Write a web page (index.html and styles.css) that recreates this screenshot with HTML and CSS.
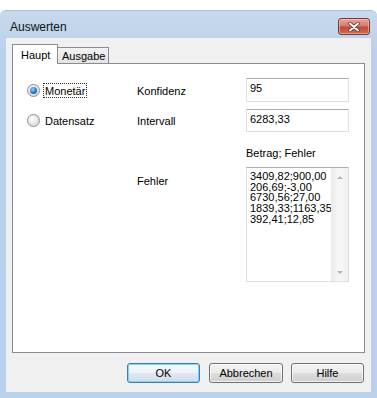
FILE: index.html
```
<!DOCTYPE html>
<html lang="de">
<head>
  <meta charset="UTF-8" />
  <title>Auswerten</title>
  <link rel="stylesheet" href="styles.css">
</head>
<body>
  <div class="window">
    <div class="titlebar">
      <span class="title">Auswerten</span>
      <span class="close">
        <svg width="12" height="10" viewBox="0 0 12 10">
          <path d="M2 1.5 L10 8.5 M10 1.5 L2 8.5" stroke="#5a2a24" stroke-width="3.4" stroke-linecap="round"/>
          <path d="M2 1.5 L10 8.5 M10 1.5 L2 8.5" stroke="#fff" stroke-width="2" stroke-linecap="round"/>
        </svg>
      </span>
    </div>
    <div class="client">
      <div class="tabs">
        <div class="tab active">Haupt</div>
        <div class="tab">Ausgabe</div>
      </div>
      <div class="panel">
        <div class="form">
          <div class="option"><span class="radio checked"></span><span class="focus">Monetär</span></div>
          <span class="label">Konfidenz</span>
          <div class="field">95</div>

          <div class="option"><span class="radio"></span><span class="text">Datensatz</span></div>
          <span class="label">Intervall</span>
          <div class="field">6283,33</div>

          <span></span>
          <span></span>
          <span class="caption">Betrag; Fehler</span>

          <span></span>
          <span class="label top">Fehler</span>
          <div class="listbox">
            <div class="lines">
              <div>3409,82;900,00</div>
              <div>206,69;-3,00</div>
              <div>6730,56;27,00</div>
              <div>1839,33;1163,35</div>
              <div>392,41;12,85</div>
            </div>
            <div class="scrollbar">
              <span class="arrow up"></span>
              <span class="arrow down"></span>
            </div>
          </div>
        </div>
      </div>
      <div class="buttons">
        <button class="btn default">OK</button>
        <button class="btn">Abbrechen</button>
        <button class="btn">Hilfe</button>
      </div>
    </div>
  </div>
</body>
</html>
```
FILE: styles.css
```
body {
  margin: 0;
  background: #fff;
  font-family: 'Liberation Sans', Arial, sans-serif;
  font-size: 11px;
  color: #000;
}
.window {
  margin-top: 10px;
  height: 388px;
  background: linear-gradient(#c8d9ed, #bad1ea 40px, #b9d1ea);
  border-top: 1px solid #a9bfd8;
  border-radius: 6px 6px 0 0;
  box-sizing: border-box;
}
.titlebar {
  height: 27px;
  padding: 4px 7px 0 10px;
  box-sizing: border-box;
  display: flex;
  align-items: center;
  justify-content: space-between;
}
.title {
  font-size: 12px;
  color: #111;
}
.close {
  width: 32px;
  height: 17px;
  box-sizing: border-box;
  border: 1px solid #7a3a33;
  border-radius: 3px;
  background: linear-gradient(#e6a89c, #d47b6c 45%, #c24a37 55%, #cf6a52);
  display: flex;
  align-items: center;
  justify-content: center;
  box-shadow: inset 0 0 0 1px rgba(255, 210, 200, 0.5);
}
.close svg {
  display: block;
}
.client {
  margin: 0 6px;
  height: 354px;
  background: #f0f0f0;
  padding: 6px 6px 9px;
  box-sizing: border-box;
  display: flex;
  flex-direction: column;
}
.tabs {
  display: flex;
  align-items: flex-end;
  height: 19px;
}
.tab {
  box-sizing: border-box;
  border: 1px solid #898c95;
  border-bottom: none;
  line-height: 14px;
}
.tab.active {
  width: 46px;
  height: 20px;
  margin-bottom: -1px;
  background: #fff;
  padding: 3px 0 0 8px;
  position: relative;
  z-index: 1;
}
.tab:not(.active) {
  width: 51px;
  height: 16px;
  border-left: none;
  background: linear-gradient(#f2f2f2, #e4e4e4);
  padding: 1px 0 0 4px;
}
.panel {
  height: 290px;
  box-sizing: border-box;
  background: #fff;
  border: 1px solid #898c95;
  padding: 14px 0 0 14px;
}
.form {
  display: grid;
  grid-template-columns: 110px 109px 103px;
  grid-template-rows: 24px 23px 21px 115px;
  row-gap: 7px;
  align-items: center;
}
.option {
  display: flex;
  align-items: center;
  gap: 3px;
}
.radio {
  width: 13px;
  height: 13px;
  box-sizing: border-box;
  border-radius: 50%;
  border: 1px solid #8f8f8f;
  background: radial-gradient(circle at 40% 35%, #ffffff, #dcdcdc 70%, #c8c8c8);
  display: flex;
  align-items: center;
  justify-content: center;
}
.radio.checked::after {
  content: "";
  width: 7px;
  height: 7px;
  border-radius: 50%;
  background: radial-gradient(circle at 40% 35%, #8fd0ff, #1f6fb8 60%, #0e4c8c);
}
.focus {
  border: 1px dotted #333;
  padding: 1px 1px 0;
  line-height: 12px;
}
.text {
  padding-left: 2px;
}
.label {
  padding-top: 1px;
}
.label.top {
  align-self: start;
  margin-top: 7px;
}
.field {
  height: 100%;
  box-sizing: border-box;
  border: 1px solid #dbdfe6;
  border-top-color: #abadb3;
  padding: 3px 0 0 3px;
  line-height: 12px;
}
.caption {
  align-self: end;
  line-height: 14px;
}
.listbox {
  height: 100%;
  box-sizing: border-box;
  border: 1px solid #dbdfe6;
  border-top-color: #abadb3;
  display: flex;
}
.lines {
  flex: 1;
  overflow: hidden;
  white-space: nowrap;
  padding: 3px 0 0 3px;
  line-height: 10.7px;
}
.scrollbar {
  width: 16px;
  background: linear-gradient(90deg, #ebebeb, #f7f7f7 40%, #f0f0f0);
  border-left: 1px solid #ececec;
  display: flex;
  flex-direction: column;
  justify-content: space-between;
  align-items: center;
  padding: 8px 0 7px;
}
.arrow {
  width: 0;
  height: 0;
  border-left: 3px solid transparent;
  border-right: 3px solid transparent;
}
.arrow.up {
  border-bottom: 3px solid #b4b4b4;
}
.arrow.down {
  border-top: 3px solid #b4b4b4;
}
.buttons {
  display: flex;
  justify-content: flex-end;
  gap: 8px;
  margin-top: 10px;
  padding-right: 1px;
}
.btn {
  width: 73px;
  height: 20px;
  box-sizing: border-box;
  border: 1px solid #707070;
  border-radius: 3px;
  background: linear-gradient(#f2f2f2, #ebebeb 50%, #dddddd 51%, #cfcfcf);
  font-family: 'Liberation Sans', Arial, sans-serif;
  font-size: 11px;
  color: #000;
  padding: 0;
  box-shadow: inset 0 0 0 1px rgba(255, 255, 255, 0.7);
}
.btn:nth-child(2) {
  width: 74px;
  margin-left: 1px;
}
.btn.default {
  border-color: #3c7fb1;
  box-shadow: inset 0 0 0 1px #7fd2f6;
  background: linear-gradient(#f4f9fc, #ecf3f8 50%, #dfe8ee 51%, #d4dde4);
}
```
